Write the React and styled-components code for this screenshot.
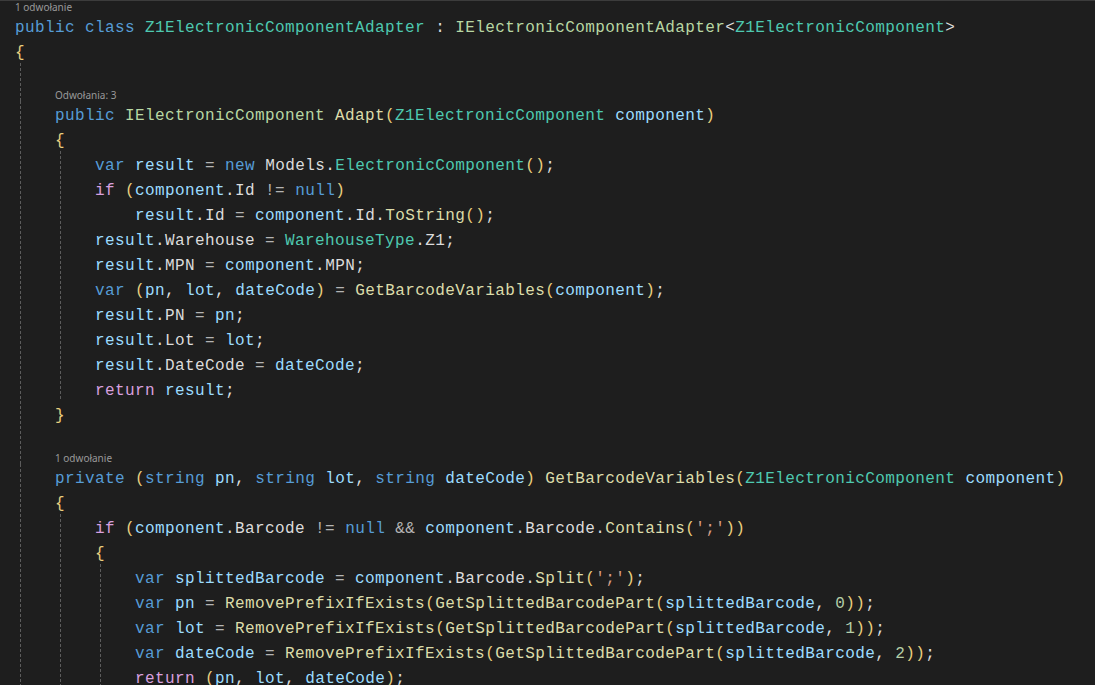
import React from 'react'
import styled, { createGlobalStyle } from 'styled-components'

// editor look
const GlobalStyle = createGlobalStyle`
  html, body {
    margin: 0;
    padding: 0;
    background: #1e1e1e;
  }
  body {
    overflow: hidden;
  }
`

const Editor = styled.div`
  height: 100vh;
  overflow: hidden;
  background: #1e1e1e;
  box-shadow: inset 0 1px 0 #3c3c3c;
  font-family: "Liberation Mono", "DejaVu Sans Mono", monospace;
  font-size: 16px;
  letter-spacing: 0.4px;
  white-space: pre;
`

const Row = styled.div`
  display: flex;
  height: ${p => (p.$lens ? 13 : 25)}px;
  padding-left: 15px;
`

const Indent = styled.div`
  flex: none;
  width: 40px;
  align-self: stretch;
  background-image: ${p =>
    p.$guide
      ? 'repeating-linear-gradient(to bottom, #5c5c5c 0 3px, transparent 3px 5px)'
      : 'none'};
  background-size: 1px 100%;
  background-position: 5px 0;
  background-repeat: no-repeat;
`

const Code = styled.span`
  display: block;
  line-height: 25px;
  padding-top: 3px;
`

const Lens = styled.span`
  display: block;
  padding-top: 1px;
  line-height: 13px;
  font-family: "Noto Sans", "Open Sans", sans-serif;
  font-size: 10px;
  letter-spacing: 0;
  color: #999999;
`

const colors = {
  kw: '#569cd6',
  ctl: '#d8a0df',
  cls: '#4ec9b0',
  ifc: '#b8d7a3',
  fn: '#dcdcaa',
  var: '#9cdcfe',
  op: '#b4b4b4',
  br: '#e9cf7f',
  num: '#b5cea8',
  str: '#d69d85',
  plain: '#dcdcdc',
}

const Tok = styled.span`
  color: ${p => colors[p.$kind]};
`

const kw = ['public', 'class', 'var', 'new', 'null', 'string', 'private']
const ctl = ['if', 'return']
const cls = ['Z1ElectronicComponentAdapter', 'Z1ElectronicComponent', 'ElectronicComponent', 'WarehouseType']
const ifc = ['IElectronicComponentAdapter', 'IElectronicComponent']
const fn = ['Adapt', 'GetBarcodeVariables', 'ToString', 'RemovePrefixIfExists', 'GetSplittedBarcodePart', 'Split', 'Contains']
const vars = ['component', 'result', 'pn', 'lot', 'dateCode', 'splittedBarcode']

const kindOf = w => {
  if (kw.includes(w)) return 'kw'
  if (ctl.includes(w)) return 'ctl'
  if (cls.includes(w)) return 'cls'
  if (ifc.includes(w)) return 'ifc'
  if (fn.includes(w)) return 'fn'
  if (vars.includes(w)) return 'var'
  if (/^\d+$/.test(w)) return 'num'
  if (/^'/.test(w)) return 'str'
  if (/^[(){}]$/.test(w)) return 'br'
  if (/^[=!&]+$/.test(w)) return 'op'
  return 'plain'
}

const tokenize = s => s.match(/'[^']*'|\w+|\s+|[=!&]+|./g) || []

const lines = [
  { lens: '1 odwołanie', g: 0, lvl: 0 },
  { g: 0, s: 'public class Z1ElectronicComponentAdapter : IElectronicComponentAdapter<Z1ElectronicComponent>' },
  { g: 0, s: '{' },
  { g: 1, s: '' },
  { lens: 'Odwołania: 3', g: 1, lvl: 1 },
  { g: 1, s: '    public IElectronicComponent Adapt(Z1ElectronicComponent component)' },
  { g: 1, s: '    {' },
  { g: 2, s: '        var result = new Models.ElectronicComponent();' },
  { g: 2, s: '        if (component.Id != null)' },
  { g: 2, s: '            result.Id = component.Id.ToString();' },
  { g: 2, s: '        result.Warehouse = WarehouseType.Z1;' },
  { g: 2, s: '        result.MPN = component.MPN;' },
  { g: 2, s: '        var (pn, lot, dateCode) = GetBarcodeVariables(component);' },
  { g: 2, s: '        result.PN = pn;' },
  { g: 2, s: '        result.Lot = lot;' },
  { g: 2, s: '        result.DateCode = dateCode;' },
  { g: 2, s: '        return result;' },
  { g: 1, s: '    }' },
  { g: 1, s: '' },
  { lens: '1 odwołanie', g: 1, lvl: 1 },
  { g: 1, s: '    private (string pn, string lot, string dateCode) GetBarcodeVariables(Z1ElectronicComponent component)' },
  { g: 1, s: '    {' },
  { g: 2, s: "        if (component.Barcode != null && component.Barcode.Contains(';'))" },
  { g: 2, s: '        {' },
  { g: 3, s: "            var splittedBarcode = component.Barcode.Split(';');" },
  { g: 3, s: '            var pn = RemovePrefixIfExists(GetSplittedBarcodePart(splittedBarcode, 0));' },
  { g: 3, s: '            var lot = RemovePrefixIfExists(GetSplittedBarcodePart(splittedBarcode, 1));' },
  { g: 3, s: '            var dateCode = RemovePrefixIfExists(GetSplittedBarcodePart(splittedBarcode, 2));' },
  { g: 3, s: '            return (pn, lot, dateCode);' },
  { g: 3, s: '        }' },
]

const Guides = ({ count, guides }) =>
  Array.from({ length: Math.max(count, guides) }, (_, i) => <Indent key={i} $guide={i < guides} />)

const CodeLine = ({ line }) => {
  if (line.lens) {
    return (
      <Row $lens>
        <Guides count={line.lvl} guides={line.g} />
        <Lens>{line.lens}</Lens>
      </Row>
    )
  }
  const lead = line.s.match(/^ */)[0].length
  const lvl = Math.floor(lead / 4)
  const body = line.s.slice(lvl * 4)
  return (
    <Row>
      <Guides count={lvl} guides={line.g} />
      <Code>
        {tokenize(body).map((t, i) => (
          <Tok key={i} $kind={kindOf(t)}>{t}</Tok>
        ))}
      </Code>
    </Row>
  )
}

const App = () => (
  <>
    <GlobalStyle />
    <Editor>
      {lines.map((line, i) => (
        <CodeLine key={i} line={line} />
      ))}
    </Editor>
  </>
)

export default App
